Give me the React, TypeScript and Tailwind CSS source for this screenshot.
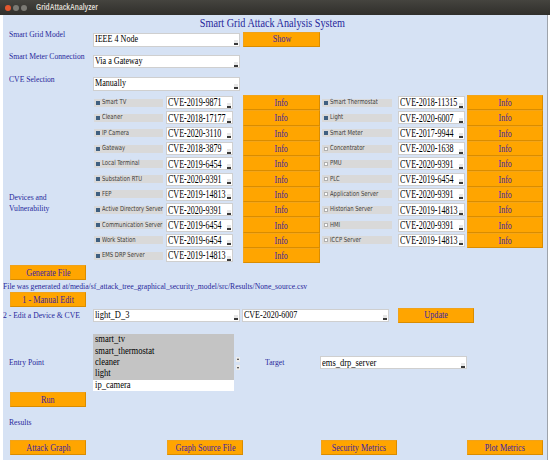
import React from 'react';

const LEFT = [
  { name: 'Smart TV', cve: 'CVE-2019-9871', on: true },
  { name: 'Cleaner', cve: 'CVE-2018-17177', on: true },
  { name: 'IP Camera', cve: 'CVE-2020-3110', on: true },
  { name: 'Gateway', cve: 'CVE-2018-3879', on: true },
  { name: 'Local Terminal', cve: 'CVE-2019-6454', on: true },
  { name: 'Substation RTU', cve: 'CVE-2020-9391', on: true },
  { name: 'FEP', cve: 'CVE-2019-14813', on: true },
  { name: 'Active Directory Server', cve: 'CVE-2020-9391', on: true },
  { name: 'Communication Server', cve: 'CVE-2019-6454', on: true },
  { name: 'Work Station', cve: 'CVE-2019-6454', on: true },
  { name: 'EMS DRP Server', cve: 'CVE-2019-14813', on: true },
];

const RIGHT = [
  { name: 'Smart Thermostat', cve: 'CVE-2018-11315', on: true },
  { name: 'Light', cve: 'CVE-2020-6007', on: true },
  { name: 'Smart Meter', cve: 'CVE-2017-9944', on: true },
  { name: 'Concentrator', cve: 'CVE-2020-1638', on: false },
  { name: 'PMU', cve: 'CVE-2020-9391', on: false },
  { name: 'PLC', cve: 'CVE-2019-6454', on: false },
  { name: 'Application Server', cve: 'CVE-2020-9391', on: false },
  { name: 'Historian Server', cve: 'CVE-2019-14813', on: false },
  { name: 'HMI', cve: 'CVE-2020-9391', on: false },
  { name: 'ICCP Server', cve: 'CVE-2019-14813', on: false },
];

const ENTRY = [
  { name: 'smart_tv', sel: true },
  { name: 'smart_thermostat', sel: true },
  { name: 'cleaner', sel: true },
  { name: 'light', sel: true },
  { name: 'ip_camera', sel: false },
];

type Dev = { name: string; cve: string; on: boolean };

function Label({ children, className = '' }: { children: React.ReactNode; className?: string }) {
  return (
    <span className={`block w-max whitespace-nowrap origin-left scale-x-[0.85] text-[9px] leading-[9px] text-[#27279b] ${className}`}>
      {children}
    </span>
  );
}

function Btn({ children, className = '' }: { children: React.ReactNode; className?: string }) {
  return (
    <div
      className={`flex items-center justify-center h-[15px] w-[76px] bg-[#ffa500] border border-[#f0a21a] border-b-[#d98c00] border-r-[#d98c00] ${className}`}
    >
      <span className="inline-block whitespace-nowrap scale-x-[0.78] text-[10.5px] leading-none text-[#3d1fa3]">
        {children}
      </span>
    </div>
  );
}

function Arrow() {
  return <span className="mr-[1px] mt-[5px] h-[5px] w-[4px] shrink-0 bg-[#e6e6e6] border-b-2 border-[#3a3a3a]" />;
}

function Select({
  value,
  className = '',
  textClass = 'text-[9.5px] scale-x-[0.85]',
}: {
  value: string;
  className?: string;
  textClass?: string;
}) {
  return (
    <div className={`flex items-center bg-white border border-[#cfcfcf] overflow-hidden ${className}`}>
      <div className="flex flex-1 min-w-0 items-center overflow-hidden pl-[1px]">
        <span className={`block w-max whitespace-nowrap origin-left leading-[1.2] text-black ${textClass}`}>{value}</span>
      </div>
      <Arrow />
    </div>
  );
}

function DevLabel({ d, w }: { d: Dev; w: string }) {
  return (
    <div className={`flex items-center h-[8px] bg-[#d9d9d9] pl-[2px] ${w}`}>
      <span
        className={`h-[4px] w-[4px] shrink-0 ${d.on ? 'bg-[#3f5f80]' : 'bg-white border-[0.5px] border-[#b0b0b0]'}`}
      />
      <span className="ml-[2px] block w-max whitespace-nowrap origin-left scale-x-[0.75] font-['DejaVu_Sans',sans-serif] text-[7px] leading-none text-[#3c3c3c]">
        {d.name}
      </span>
    </div>
  );
}

function Info({ className = '' }: { className?: string }) {
  return (
    <div
      className={`flex items-center justify-center self-stretch bg-[#ffa500] border border-[#f3a519] border-b-[#d98c00] border-r-[#d98c00] ${className}`}
    >
      <span className="inline-block scale-x-[0.73] text-[11px] leading-none text-[#3d1fa3]">Info</span>
    </div>
  );
}

function DeviceRow({ left, right }: { left: Dev; right?: Dev }) {
  return (
    <div className="flex h-[15.3px] items-center">
      <DevLabel d={left} w="w-[69px]" />
      <Select value={left.cve} className="ml-[3px] w-[67px] h-[13px]" textClass="text-[12px] scale-x-[0.67]" />
      <Info className="ml-[10px] w-[77px]" />
      {right && (
        <>
          <div className="ml-[2px]">
            <DevLabel d={right} w="w-[70px]" />
          </div>
          <Select value={right.cve} className="ml-[6px] w-[67px] h-[13px]" textClass="text-[12px] scale-x-[0.67]" />
          <Info className="ml-[2px] w-[76px]" />
        </>
      )}
    </div>
  );
}

export default function App() {
  return (
    <div className="w-[550px] h-[463px] bg-white overflow-hidden font-['Liberation_Serif',serif]">
      <div className="flex h-[15px] items-center bg-gradient-to-b from-[#45443f] to-[#302f2b]">
        <span className="ml-[5px] h-[6px] w-[6px] rounded-full bg-[#e4572e]" />
        <span className="ml-[2px] h-[6px] w-[6px] rounded-full bg-[#7b7a74]" />
        <span className="ml-[2px] h-[6px] w-[6px] rounded-full bg-[#7b7a74]" />
        <span className="ml-[9px] inline-block origin-left scale-x-[0.74] font-['Liberation_Sans',sans-serif] text-[9px] font-bold leading-none text-[#dcd9d0]">
          GridAttackAnalyzer
        </span>
      </div>

      <div className="ml-[3px] flex h-[445px] w-[545px] flex-col bg-[#d6e2f4] border-r border-[#9da3ab]">
        <div className="flex h-[15px] items-center justify-center pr-[6px]">
          <span className="inline-block scale-x-[0.85] text-[12px] leading-none text-[#27279b]">
            Smart Grid Attack Analysis System
          </span>
        </div>

        <div className="flex h-[22px] items-start">
          <div className="w-[90px] pl-[6px]">
            <Label>Smart Grid Model</Label>
          </div>
          <Select value="IEEE 4 Node" className="mt-[3px] w-[147px] h-[14px]" />
          <Btn className="ml-[3px] mt-[2px] w-[77px]">Show</Btn>
        </div>
        <div className="flex h-[22px] items-start">
          <div className="w-[90px] pl-[6px]">
            <Label>Smart Meter Connection</Label>
          </div>
          <Select value="Via a Gateway" className="mt-[3px] w-[147px] h-[13px]" />
        </div>
        <div className="flex h-[21px] items-start">
          <div className="w-[90px] pl-[6px] pt-[1px]">
            <Label>CVE Selection</Label>
          </div>
          <Select value="Manually" className="mt-[3px] w-[147px] h-[14px]" />
        </div>

        <div className="flex">
          <div className="flex w-[91px] flex-col pl-[6px] pt-[97px]">
            <Label className="leading-[11px]">Devices and</Label>
            <Label className="leading-[11px]">Vulnerability</Label>
          </div>
          <div className="flex flex-col">
            {LEFT.map((d, i) => (
              <DeviceRow key={d.name} left={d} right={RIGHT[i]} />
            ))}
          </div>
        </div>

        <Btn className="ml-[7px] mt-[2px]">Generate File</Btn>
        <div className="flex h-[11px] items-center">
          <span className="block w-max whitespace-nowrap origin-left scale-x-[0.9] text-[8.5px] leading-none text-[#27279b]">
            File was generated at/media/sf_attack_tree_graphical_security_model/src/Results/None_source.csv
          </span>
        </div>
        <Btn className="ml-[7px] mt-[1px]">1 - Manual Edit</Btn>

        <div className="flex h-[16px] items-center">
          <div className="w-[90px]">
            <Label>2 - Edit a Device &amp; CVE</Label>
          </div>
          <Select value="light_D_3" className="w-[147px] h-[13px]" textClass="text-[10px] scale-x-[0.85]" />
          <Select value="CVE-2020-6007" className="ml-[2px] w-[147px] h-[13px]" textClass="text-[10px] scale-x-[0.8]" />
          <Btn className="ml-[9px]">Update</Btn>
        </div>

        <div className="mt-[11px] flex h-[57px] items-center">
          <div className="w-[90px] pl-[6px]">
            <Label>Entry Point</Label>
          </div>
          <div className="flex h-full w-[141px] flex-col">
            {ENTRY.map((e) => (
              <div
                key={e.name}
                className={`flex h-[11.4px] items-center pl-[2px] ${e.sel ? 'bg-[#c4c4c4]' : 'bg-white'}`}
              >
                <span className="block w-max whitespace-nowrap origin-left scale-x-[0.9] text-[9.5px] leading-[1.2] text-black">
                  {e.name}
                </span>
              </div>
            ))}
          </div>
          <div className="flex w-[7px] flex-col items-center gap-[3px] pt-[1px]">
            <div className="flex h-[5px] w-[4px] items-start justify-center bg-[#ececec]">
              <span className="mt-[1px] border-x-[1.5px] border-b-[2px] border-x-transparent border-b-[#333]" />
            </div>
            <div className="flex h-[5px] w-[4px] items-end justify-center bg-[#ececec]">
              <span className="mb-[1px] border-x-[1.5px] border-t-[2px] border-x-transparent border-t-[#333]" />
            </div>
          </div>
          <div className="ml-[24px] w-[55px]">
            <Label>Target</Label>
          </div>
          <Select value="ems_drp_server" className="w-[147px] h-[13px]" textClass="text-[10px] scale-x-[0.85]" />
        </div>

        <Btn className="ml-[7px] mt-[1px]">Run</Btn>
        <div className="flex h-[30px] items-center pl-[6px]">
          <Label>Results</Label>
        </div>
        <div className="mt-[3px] flex">
          <Btn className="ml-[7px]">Attack Graph</Btn>
          <Btn className="ml-[81px]">Graph Source File</Btn>
          <Btn className="ml-[78px]">Security Metrics</Btn>
          <Btn className="ml-[70px]">Plot Metrics</Btn>
        </div>
      </div>
    </div>
  );
}
